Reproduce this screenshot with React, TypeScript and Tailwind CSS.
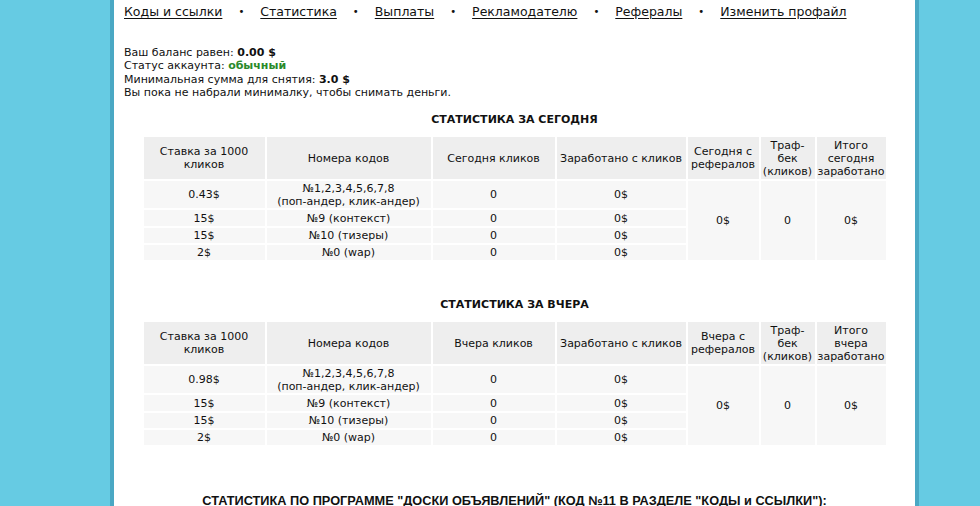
import React from "react";

type Row = { rate: string; codes: string[]; clicks: string; earned: string };

const navLinks = [
  "Коды и ссылки",
  "Статистика",
  "Выплаты",
  "Рекламодателю",
  "Рефералы",
  "Изменить профайл",
];

const StatTable = ({
  title,
  rows,
  clicksLabel,
  refLabel,
  totalLabel,
}: {
  title: string;
  rows: Row[];
  clicksLabel: string;
  refLabel: string[];
  totalLabel: string[];
}) => {
  const th = "bg-[#eeeeee] font-normal text-center align-middle leading-[13px] p-0";
  const td = "bg-[#f7f7f7] text-center align-middle leading-[13px] p-0";
  return (
    <div className="flex flex-col items-center">
      <div className="font-bold text-[11px] leading-[13px] h-[13px]">{title}</div>
      <table className="mt-[9px] w-[746px] table-fixed border-separate border-spacing-[2px]">
        <colgroup>
          <col className="w-[121px]" />
          <col className="w-[164px]" />
          <col className="w-[122px]" />
          <col className="w-[129px]" />
          <col className="w-[71px]" />
          <col className="w-[54px]" />
          <col className="w-[69px]" />
        </colgroup>
        <thead>
          <tr className="h-[42px]">
            <th className={th}>
              Ставка за 1000
              <br />
              кликов
            </th>
            <th className={th}>Номера кодов</th>
            <th className={th}>{clicksLabel}</th>
            <th className={th}>Заработано с кликов</th>
            <th className={th}>
              {refLabel[0]}
              <br />
              {refLabel[1]}
            </th>
            <th className={th}>
              Траф-
              <br />
              бек
              <br />
              (кликов)
            </th>
            <th className={th}>
              {totalLabel[0]}
              <br />
              {totalLabel[1]}
              <br />
              заработано
            </th>
          </tr>
        </thead>
        <tbody>
          {rows.map((r, i) => (
            <tr key={i} className={i === 0 ? "h-[27px]" : i === 1 ? "h-[16px]" : "h-[15px]"}>
              <td className={td}>{r.rate}</td>
              <td className={td}>
                {r.codes.map((c, j) => (
                  <div key={j}>{c}</div>
                ))}
              </td>
              <td className={td}>{r.clicks}</td>
              <td className={td}>{r.earned}</td>
              {i === 0 && (
                <>
                  <td rowSpan={4} className={td}>
                    0$
                  </td>
                  <td rowSpan={4} className={td}>
                    0
                  </td>
                  <td rowSpan={4} className={td}>
                    0$
                  </td>
                </>
              )}
            </tr>
          ))}
        </tbody>
      </table>
    </div>
  );
};

const makeRows = (rate: string): Row[] => [
  { rate, codes: ["№1,2,3,4,5,6,7,8", "(поп-андер, клик-андер)"], clicks: "0", earned: "0$" },
  { rate: "15$", codes: ["№9 (контекст)"], clicks: "0", earned: "0$" },
  { rate: "15$", codes: ["№10 (тизеры)"], clicks: "0", earned: "0$" },
  { rate: "2$", codes: ["№0 (wap)"], clicks: "0", earned: "0$" },
];

export default function App() {
  return (
    <div className="h-[506px] overflow-hidden bg-[#66cbe3]">
      <div
        className="ml-[110px] w-[809px] h-full border-x-4 border-[#4aa8c4] bg-white text-[#111] text-[11px]"
        style={{ fontFamily: '"DejaVu Sans", Verdana, sans-serif' }}
      >
        <div className="pl-[10px] pt-[4px] flex items-center text-[12.5px] leading-[16px]">
          {navLinks.map((l, i) => (
            <React.Fragment key={l}>
              {i > 0 && <span className="mx-[16px] text-[10px]">•</span>}
              <a href="#" className="underline underline-offset-2 text-[#111]">
                {l}
              </a>
            </React.Fragment>
          ))}
        </div>

        <div className="pl-[10px] mt-[26px] leading-[13.3px]">
          <div>
            Ваш баланс равен: <b>0.00 $</b>
          </div>
          <div>
            Статус аккаунта: <b className="text-[#2a8a2a]">обычный</b>
          </div>
          <div>
            Минимальная сумма для снятия: <b>3.0 $</b>
          </div>
          <div>Вы пока не набрали минималку, чтобы снимать деньги.</div>
        </div>

        <div className="mt-[14px]">
          <StatTable
            title="СТАТИСТИКА ЗА СЕГОДНЯ"
            rows={makeRows("0.43$")}
            clicksLabel="Сегодня кликов"
            refLabel={["Сегодня с", "рефералов"]}
            totalLabel={["Итого", "сегодня"]}
          />
        </div>

        <div className="mt-[36px]">
          <StatTable
            title="СТАТИСТИКА ЗА ВЧЕРА"
            rows={makeRows("0.98$")}
            clicksLabel="Вчера кликов"
            refLabel={["Вчера с", "рефералов"]}
            totalLabel={["Итого", "вчера"]}
          />
        </div>

        <div
          className="mt-[47px] text-center font-bold text-[12.75px] leading-[14px]"
          style={{ fontFamily: '"Liberation Sans Narrow", "Liberation Sans", Arial, sans-serif' }}
        >
          СТАТИСТИКА ПО ПРОГРАММЕ "ДОСКИ ОБЪЯВЛЕНИЙ" (КОД №11 В РАЗДЕЛЕ "КОДЫ и ССЫЛКИ"):
        </div>
      </div>
    </div>
  );
}
